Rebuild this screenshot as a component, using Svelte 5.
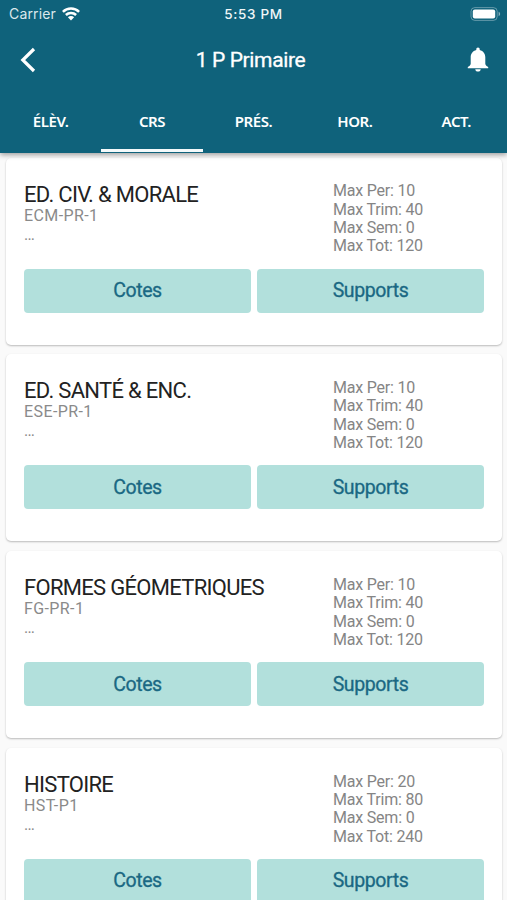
<script lang="ts">
	type Course = {
		name: string;
		code: string;
		per: number;
		trim: number;
		sem: number;
		tot: number;
	};

	const tabs = ['ÉLÈV.', 'CRS', 'PRÉS.', 'HOR.', 'ACT.'];
	let active = $state('CRS');

	const courses: Course[] = [
		{ name: 'ED. CIV. & MORALE', code: 'ECM-PR-1', per: 10, trim: 40, sem: 0, tot: 120 },
		{ name: 'ED. SANTÉ & ENC.', code: 'ESE-PR-1', per: 10, trim: 40, sem: 0, tot: 120 },
		{ name: 'FORMES GÉOMETRIQUES', code: 'FG-PR-1', per: 10, trim: 40, sem: 0, tot: 120 },
		{ name: 'HISTOIRE', code: 'HST-P1', per: 20, trim: 80, sem: 0, tot: 240 }
	];
</script>

<div class="screen">
	<header>
		<div class="status">
			<div class="carrier">
				<span>Carrier</span>
				<svg width="18" height="14" viewBox="0 0 18 14" fill="none" stroke="#fff" stroke-width="2.5">
					<path d="M0.9 4.8a11.5 11.5 0 0 1 16.2 0" />
					<path d="M3.9 8a7.2 7.2 0 0 1 10.2 0" />
					<path d="M9 13.4L5.9 10.2a4.4 4.4 0 0 1 6.2 0z" fill="#fff" stroke="none" />
				</svg>
			</div>
			<div class="time">5:53 PM</div>
			<div class="battery">
				<svg width="31" height="14" viewBox="0 0 31 14">
					<rect x="1" y="0.6" width="26.2" height="12.8" rx="3.8" fill="none" stroke="#fff" stroke-opacity="0.35" />
					<rect x="2.8" y="2.4" width="22.4" height="9.2" rx="2" fill="#fff" />
					<path d="M28.6 4.8c2 .7 2 3.7 0 4.4z" fill="#fff" fill-opacity="0.5" />
				</svg>
			</div>
		</div>

		<div class="bar">
			<button class="icon" aria-label="Retour">
				<svg width="16" height="26" viewBox="0 0 16 26" fill="none" stroke="#fff" stroke-width="3.2">
					<path d="M14 2L2.8 13L14 24" />
				</svg>
			</button>
			<h1>1 P Primaire</h1>
			<button class="icon" aria-label="Notifications">
				<svg width="22" height="25" viewBox="0 0 22 25" fill="#fff">
					<path d="M11 .6c-1.1 0-1.7.8-1.7 1.8v.5C5.7 3.8 3.7 6.6 3.7 10.2v6.6c0 1.2-1.1 2.1-2.9 3.2v1.3h20.4V20c-1.8-1.1-2.9-2-2.9-3.2v-6.6c0-3.6-2-6.4-5.6-7.3v-.5c0-1-.6-1.8-1.7-1.8z" />
					<path d="M8.3 22.3h5.4c0 1.4-1.2 2.3-2.7 2.3s-2.7-.9-2.7-2.3z" />
				</svg>
			</button>
		</div>

		<nav>
			{#each tabs as tab}
				<button class="tab" class:active={active === tab} onclick={() => (active = tab)}>
					<span>{tab}</span>
				</button>
			{/each}
		</nav>
	</header>

	<main>
		{#each courses as course}
			<article class="card">
				<div class="top">
					<div class="info">
						<h2>{course.name}</h2>
						<p class="code">{course.code}</p>
						<p class="dots">...</p>
					</div>
					<ul class="max">
						<li>Max Per: {course.per}</li>
						<li>Max Trim: {course.trim}</li>
						<li>Max Sem: {course.sem}</li>
						<li>Max Tot: {course.tot}</li>
					</ul>
				</div>
				<div class="actions">
					<button>Cotes</button>
					<button>Supports</button>
				</div>
			</article>
		{/each}
	</main>
</div>

<style>
	:global(body) {
		margin: 0;
		overflow: hidden;
	}
	.screen {
		display: flex;
		flex-direction: column;
		height: 900px;
		overflow: hidden;
		background: #fafafa;
		font-family: Roboto, 'Open Sans', sans-serif;
	}
	button {
		margin: 0;
		padding: 0;
		border: 0;
		background: none;
		color: inherit;
		font: inherit;
	}
	svg {
		display: block;
	}
	header {
		position: relative;
		z-index: 1;
		flex: none;
		height: 152.5px;
		background: #0f627b;
		color: #fff;
		box-shadow: 0 2px 5px rgba(0, 0, 0, 0.36);
	}
	.status {
		display: grid;
		grid-template-columns: 1fr auto 1fr;
		align-items: center;
		height: 27px;
		padding: 0 6px 0 9px;
		font-family: Inter, sans-serif;
		font-size: 14px;
	}
	.carrier {
		display: flex;
		align-items: center;
		gap: 6px;
		color: #dbe8ec;
		letter-spacing: 0.15px;
	}
	.time {
		margin-right: 3px;
		font-weight: 500;
		font-size: 13.5px;
		letter-spacing: 0.7px;
		color: #f0f6f8;
	}
	.battery {
		justify-self: end;
		margin-right: 0;
	}
	.bar {
		display: grid;
		grid-template-columns: 57px 1fr 63px;
		align-items: center;
		height: 65px;
	}
	.icon {
		display: flex;
		padding-left: 20px;
	}
	.icon:last-child {
		justify-content: flex-end;
		padding: 0 18px 0 0;
	}
	h1 {
		margin: 0;
		padding-top: 1px;
		text-align: center;
		font-size: 21px;
		font-weight: 400;
		letter-spacing: -0.35px;
		-webkit-text-stroke: 0.3px;
	}
	nav {
		display: grid;
		grid-template-columns: repeat(5, 1fr);
		height: 60px;
	}
	.tab {
		display: flex;
		align-items: center;
		justify-content: center;
		border-bottom: 3px solid transparent;
		font-family: 'Noto Sans', sans-serif;
		font-size: 15px;
		font-weight: 600;
		letter-spacing: -0.4px;
	}
	.tab.active {
		border-bottom-color: #f4fafb;
	}
	main {
		display: flex;
		flex-direction: column;
		gap: 9.75px;
		padding: 5px 5px 0 6px;
	}
	.card {
		box-sizing: border-box;
		flex: none;
		height: 187px;
		padding: 24px 18px 0;
		border-radius: 5px;
		background: #fff;
		box-shadow: 0 1px 2px rgba(0, 0, 0, 0.26);
	}
	.top {
		display: flex;
		height: 87px;
	}
	.info {
		width: 309px;
	}
	h2 {
		margin: 0;
		color: #222;
		font-size: 22px;
		font-weight: 400;
		line-height: 26px;
		letter-spacing: -0.7px;
		white-space: nowrap;
	}
	p {
		margin: 0;
		color: #8a8a8a;
		font-size: 16px;
		line-height: 18px;
	}
	.code {
		margin-top: -1px;
		letter-spacing: 0.4px;
	}
	.dots {
		line-height: 20px;
		letter-spacing: -0.8px;
	}
	.max {
		margin: 0;
		padding: 0.75px 0 0;
		list-style: none;
		color: #858585;
		font-size: 16px;
		line-height: 18.4px;
		letter-spacing: -0.2px;
	}
	.actions {
		display: grid;
		grid-template-columns: 1fr 1fr;
		gap: 6px;
	}
	.actions button {
		height: 44px;
		border-radius: 4px;
		background: #b2e0dc;
		color: #1a6883;
		font-size: 19.5px;
		font-weight: 400;
		letter-spacing: -0.4px;
		-webkit-text-stroke: 0.3px;
	}
</style>
